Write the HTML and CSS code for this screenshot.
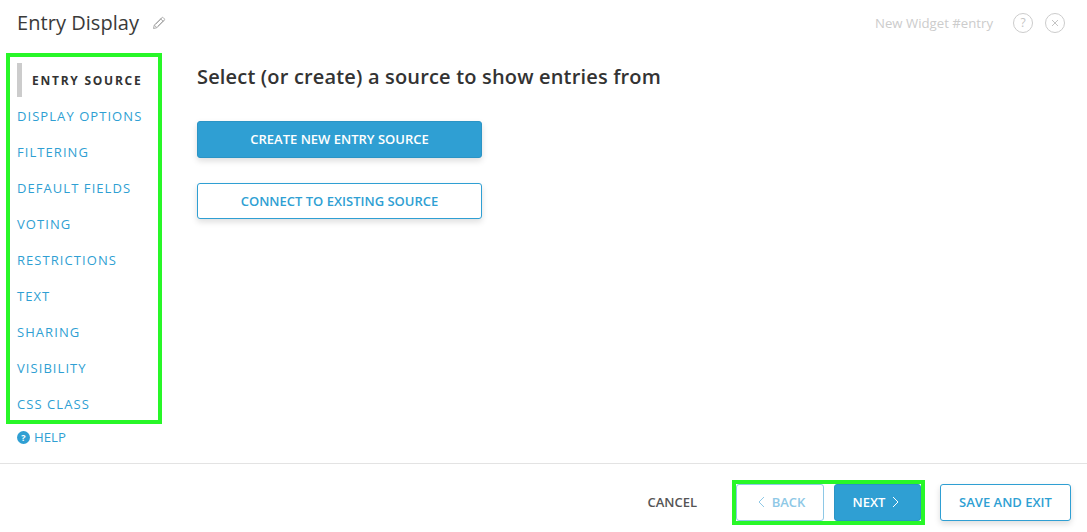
FILE: index.html
```html
<!DOCTYPE html>
<html lang='en'>
<head>
  <meta charset='utf-8' />
  <title>Entry Display</title>
  <link rel="stylesheet" href="styles.css">
</head>
<body>
  <div id="main">
    <header class="top">
      <h1>Entry Display</h1>
      <svg class="pencil" width="14" height="14" viewBox="0 0 14 14">
        <path d="M1.5 12.5l.8-3.4L9.6 1.8a1.3 1.3 0 0 1 1.8 0l.8.8a1.3 1.3 0 0 1 0 1.8L4.9 11.7zM2.3 9.1l2.6 2.6M8.6 2.8l2.6 2.6M3.6 8.4l6-6M5.6 10.4l6-6" fill="none" stroke="#aaa" stroke-width="1"/>
      </svg>
      <span class="widget-name">New Widget #entry</span>
      <span class="round-icon round-help">?</span>
      <span class="round-icon">
        <svg width="8" height="8" viewBox="0 0 8 8"><path d="M1 1l6 6M7 1l-6 6" stroke="#c4c4c4" stroke-width="1"/></svg>
      </span>
    </header>
    <div class="middle">
      <aside class="side">
        <nav class="steps">
          <a class="step active">ENTRY SOURCE</a>
          <a class="step">DISPLAY OPTIONS</a>
          <a class="step">FILTERING</a>
          <a class="step">DEFAULT FIELDS</a>
          <a class="step">VOTING</a>
          <a class="step">RESTRICTIONS</a>
          <a class="step">TEXT</a>
          <a class="step">SHARING</a>
          <a class="step">VISIBILITY</a>
          <a class="step">CSS CLASS</a>
        </nav>
        <a class="help"><span class="help-icon">?</span>HELP</a>
      </aside>
      <section class="content">
        <h2>Select (or create) a source to show entries from</h2>
        <button class="btn btn-solid btn-wide">CREATE NEW ENTRY SOURCE</button>
        <button class="btn btn-line btn-wide">CONNECT TO EXISTING SOURCE</button>
      </section>
    </div>
    <footer class="bottom">
      <a class="cancel">CANCEL</a>
      <div class="pager">
        <button class="btn btn-back">
          <svg width="7" height="12" viewBox="0 0 7 12"><path d="M6 1L1 6l5 5" fill="none" stroke="#8ec8e6" stroke-width="1"/></svg>
          BACK
        </button>
        <button class="btn btn-solid btn-next">
          NEXT
          <svg width="7" height="12" viewBox="0 0 7 12"><path d="M1 1l5 5-5 5" fill="none" stroke="#fff" stroke-width="1"/></svg>
        </button>
      </div>
      <button class="btn btn-line btn-save">SAVE AND EXIT</button>
    </footer>
  </div>
</body>
</html>
```
FILE: styles.css
```css
html, body {
  margin: 0;
  height: 100%;
  background: white;
}
body {
  font-family: "Open Sans", "Liberation Sans", sans-serif;
  color: #333;
}
#main {
  height: 532px;
  display: flex;
  flex-direction: column;
  overflow: hidden;
}
.top {
  height: 53px;
  padding: 0 22px 8px 17px;
  box-sizing: border-box;
  display: flex;
  align-items: center;
}
h1 {
  margin: 0;
  font-size: 20px;
  font-weight: 400;
  letter-spacing: .05px;
  color: #3a3a3a;
}
.pencil {
  margin-left: 13px;
}
.widget-name {
  margin-left: auto;
  font-size: 13.2px;
  color: #ccc;
}
.round-icon {
  width: 18px;
  height: 18px;
  margin-left: 12px;
  border: 1px solid #ccc;
  border-radius: 50%;
  display: flex;
  align-items: center;
  justify-content: center;
  font-size: 12px;
  color: #c4c4c4;
}
.round-help {
  margin-left: 20px;
}
.middle {
  height: 410px;
  display: flex;
  border-bottom: 1px solid #e3e3e3;
}
.side {
  width: 197px;
  padding-left: 6px;
  box-sizing: border-box;
}
.steps {
  width: 156px;
  height: 371px;
  box-sizing: border-box;
  border: 4px solid #28f728;
  padding: 5px 0 0 7px;
}
.step {
  display: block;
  height: 36px;
  line-height: 36px;
  font-size: 13px;
  letter-spacing: 1.06px;
  color: #2f9fd3;
  white-space: nowrap;
}
.step.active {
  height: 34px;
  line-height: 35px;
  margin: 1px 0;
  padding-left: 10px;
  border-left: 5px solid #ccc;
  font-weight: 700;
  font-size: 12px;
  letter-spacing: 1.75px;
  color: #333;
}
.help {
  margin: 4px 0 0 11px;
  display: flex;
  align-items: center;
  font-size: 13.2px;
  color: #2f9fd3;
}
.help-icon {
  width: 13px;
  height: 13px;
  margin-right: 4px;
  border-radius: 50%;
  background: #2f9fd3;
  color: white;
  font-size: 9px;
  font-weight: 700;
  line-height: 13px;
  text-align: center;
}
.content {
  flex: 1;
}
h2 {
  margin: 10px 0 31px;
  font-size: 20px;
  line-height: 27px;
  font-weight: 600;
  letter-spacing: .17px;
  color: #333;
}
.btn {
  font-family: inherit;
  font-size: 13px;
  font-weight: 600;
  border-radius: 3px;
  box-sizing: border-box;
  display: block;
  padding: 0;
  box-shadow: 0 3px 6px #00000022;
}
.btn-solid {
  color: white;
  background: #2f9fd3;
  border: 1px solid #2b94c5;
  padding-bottom: 2px;
}
.btn-line {
  color: #2f9fd3;
  background: white;
  border: 1px solid #2f9fd3;
}
.btn-wide {
  width: 285px;
  height: 37px;
  margin-bottom: 25px;
}
.btn-wide.btn-line {
  height: 36px;
}
.bottom {
  flex: 1;
  display: flex;
  align-items: center;
  padding: 4px 16px 0 0;
  justify-content: flex-end;
}
.cancel {
  font-size: 13px;
  font-weight: 600;
  color: #555;
  margin: 4px 35px 0 0;
}
.pager {
  display: flex;
  gap: 10px;
  border: 4px solid #28f728;
  margin-top: 5px;
}
.bottom .btn-save {
  margin-top: 5px;
  margin-left: 15px;
  width: 131px;
  height: 37px;
  padding-bottom: 2px;
}
.btn-back, .btn-next {
  display: flex;
  align-items: center;
  justify-content: center;
  gap: 7px;
  height: 37px;
  box-shadow: none;
  padding-bottom: 2px;
}
.btn-back {
  width: 88px;
  padding-left: 3px;
  color: #8ec8e6;
  background: white;
  border: 1px solid #8ec8e6;
}
.btn-next {
  width: 87px;
  padding-right: 3px;
}
```
